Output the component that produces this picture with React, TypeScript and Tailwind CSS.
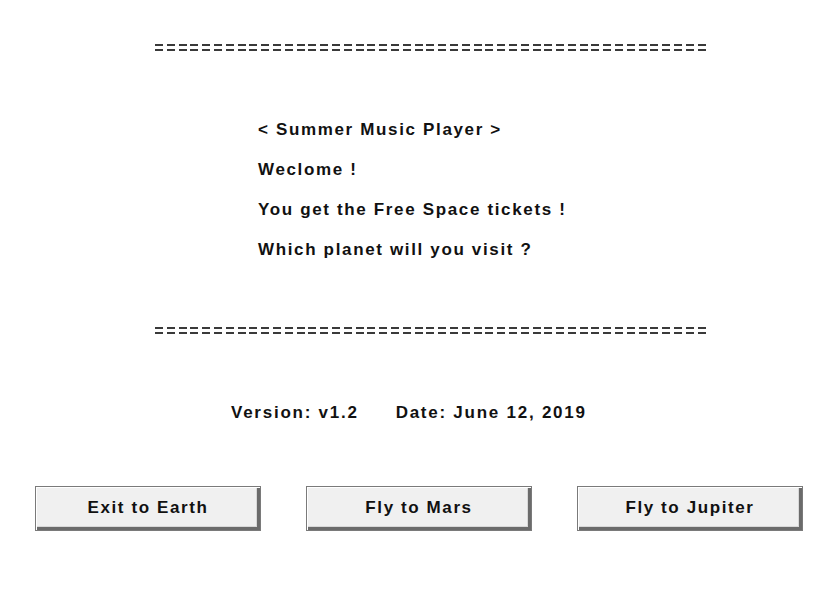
import React from "react";

const font = { fontFamily: '"Liberation Sans", Arial, sans-serif' };

const Rule: React.FC = () => (
    <div className="flex gap-[3.8px] pl-[155px]">
        {Array.from({ length: 47 }).map((_, i) => (
            <div key={i} className="flex flex-col gap-[3px] w-[8px]">
                <div className="h-[2px] bg-[#3a3a3a]" />
                <div className="h-[2px] bg-[#3a3a3a]" />
            </div>
        ))}
    </div>
);

const Button: React.FC<{ label: string }> = ({ label }) => (
    <button className="w-[226px] h-[45px] bg-[#f0f0f0] border border-[#7a7a7a] shadow-[inset_1px_1px_0_#ffffff,inset_-3px_-3px_0_#6b6b6b,inset_-4px_-4px_0_#d8d8d8] text-[17px] font-bold tracking-[1.6px] text-[#111] pb-[2px]">
        {label}
    </button>
);

export default function App() {
    return (
        <div className="w-[840px] h-[592px] bg-white text-[#111] flex flex-col" style={font}>
            <div className="mt-[44px]">
                <Rule />
            </div>

            <div className="flex flex-col pl-[258px] mt-[69px] gap-[20px] text-[17px] font-bold tracking-[1.65px] leading-[20px]">
                <p>&lt; Summer Music Player &gt;</p>
                <p>Weclome !</p>
                <p>You get the Free Space tickets !</p>
                <p>Which planet will you visit ?</p>
            </div>

            <div className="mt-[67px]">
                <Rule />
            </div>

            <div className="flex pl-[231px] mt-[69px] gap-[37px] text-[17px] font-bold tracking-[1.75px] leading-[20px]">
                <p>Version: v1.2</p>
                <p>Date: June 12, 2019</p>
            </div>

            <div className="flex pl-[35px] mt-[63px] gap-[45px]">
                <Button label="Exit to Earth" />
                <Button label="Fly to Mars" />
                <Button label="Fly to Jupiter" />
            </div>
        </div>
    );
}
